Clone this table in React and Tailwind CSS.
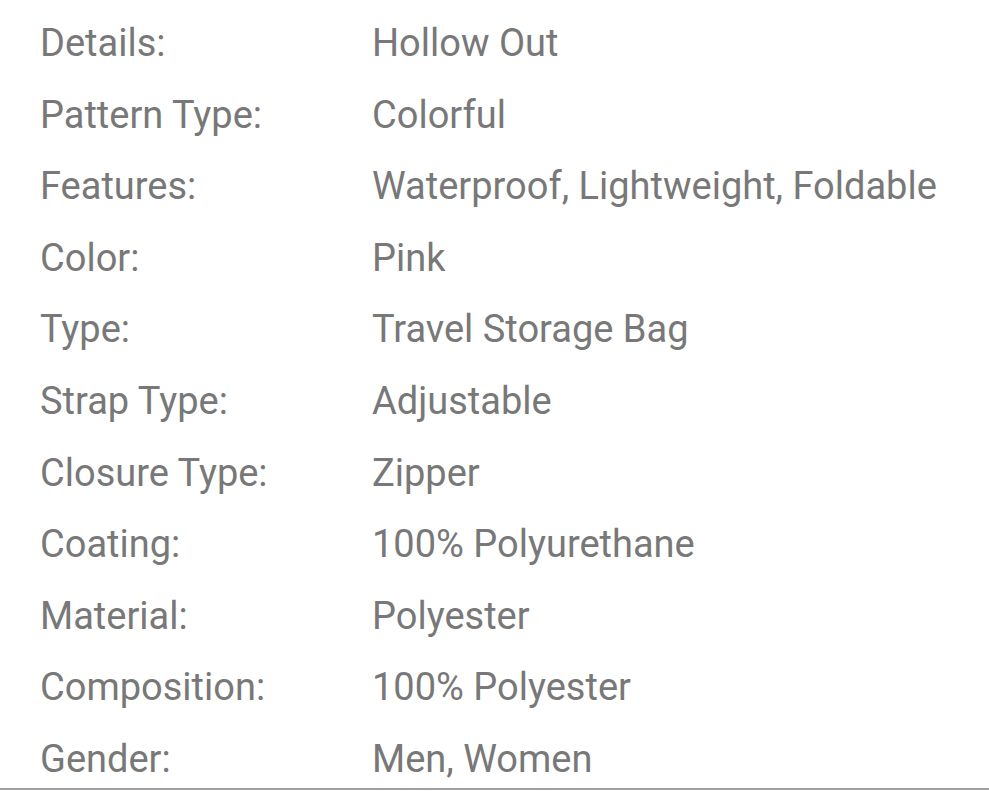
const rows = [
  ['Details:', 'Hollow Out'],
  ['Pattern Type:', 'Colorful'],
  ['Features:', 'Waterproof, Lightweight, Foldable'],
  ['Color:', 'Pink'],
  ['Type:', 'Travel Storage Bag'],
  ['Strap Type:', 'Adjustable'],
  ['Closure Type:', 'Zipper'],
  ['Coating:', '100% Polyurethane'],
  ['Material:', 'Polyester'],
  ['Composition:', '100% Polyester'],
  ['Gender:', 'Men, Women'],
];

export default function App() {
  return (
    <div className="w-[989px] h-[791px] bg-white overflow-hidden font-['Roboto',sans-serif] text-[#787878]">
      <div className="h-[790px] border-b-2 border-[#a0a0a0] pt-[8px] pl-[40px]">
        {rows.map(([label, value]) => (
          <div key={label} className="flex h-[71.6px] items-center text-[38px] leading-[71.6px] whitespace-nowrap">
            <div className="w-[332px] shrink-0">{label}</div>
            <div>{value}</div>
          </div>
        ))}
      </div>
    </div>
  );
}
